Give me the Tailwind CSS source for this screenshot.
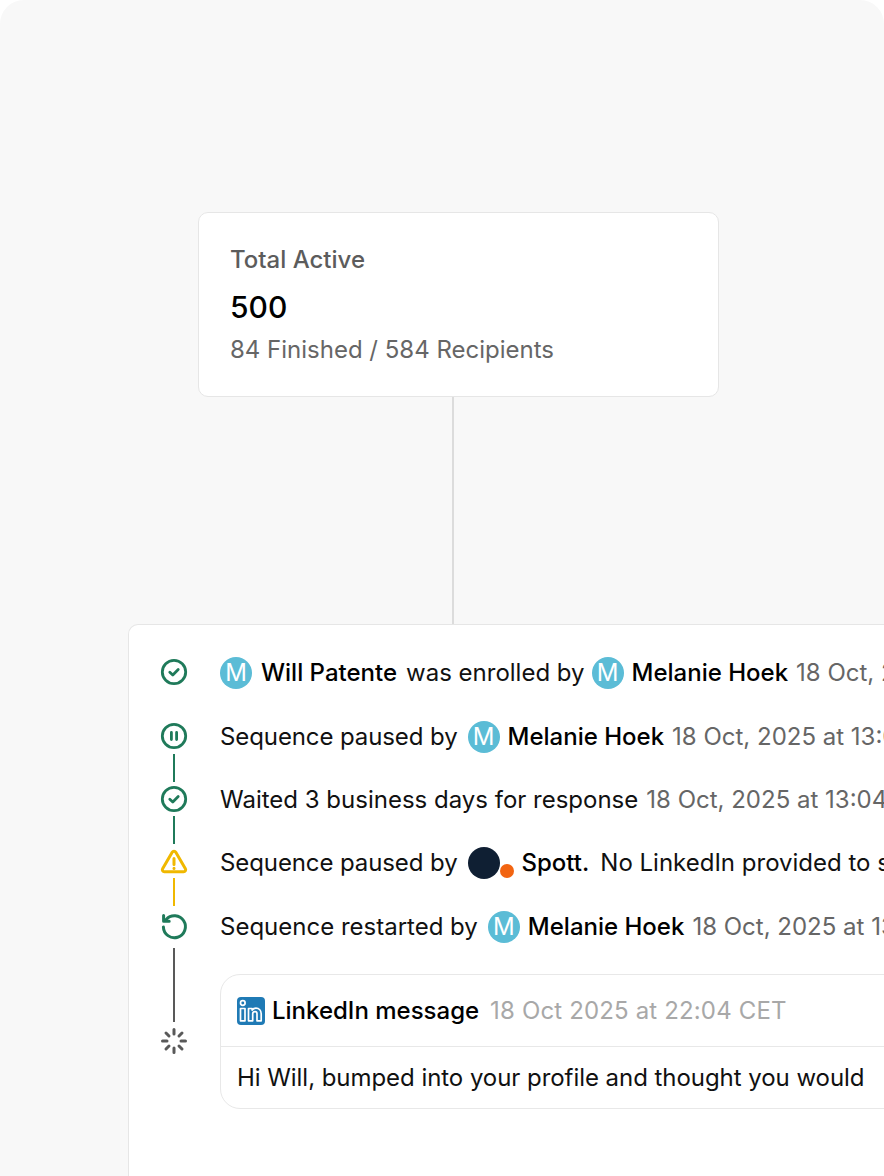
<!DOCTYPE html>
<html lang="en">
<head>
    <meta charset="UTF-8">
    <title>Sequence activity</title>
    <script src="https://cdn.jsdelivr.net/npm/@tailwindcss/browser@4"></script>
</head>
<body class="bg-white font-['Inter',sans-serif]">
    <div class="w-[884px] h-[1176px] bg-[#f8f8f8] rounded-t-[24px] overflow-hidden pt-[212px] flex flex-col">

        <!-- Summary card -->
        <div class="ml-[198px] w-[521px] h-[185px] shrink-0 bg-white border border-[#e6e6e6] rounded-[10px] pl-[31px] pt-[31px]">
            <p class="text-[24px] leading-[32px] font-medium text-[#5c5c5c]">Total Active</p>
            <p class="mt-[11px] text-[30px] leading-[40px] font-medium text-black">500</p>
            <p class="mt-[7px] text-[24px] leading-[32px] text-[#666666]">84 Finished / 584 Recipients</p>
        </div>

        <!-- Connector -->
        <div class="ml-[452px] w-[2px] h-[227px] shrink-0 bg-[#dcdcdc]"></div>

        <!-- Activity card -->
        <div class="ml-[128px] w-[900px] grow bg-white border border-b-0 border-[#e6e6e6] rounded-tl-[10px] pl-[29px] pt-[31px] flex">

            <!-- Timeline rail -->
            <div class="w-[32px] shrink-0 flex flex-col items-center">
                <svg class="w-[32px] h-[32px] shrink-0" viewBox="0 0 32 32" fill="none" stroke="#1f7a5a" stroke-width="2.8" stroke-linecap="round" stroke-linejoin="round"><circle cx="16" cy="16" r="11.7"/><path d="M11.8 16.2l3 2.8 5.4-5.4"/></svg>
                <svg class="w-[32px] h-[32px] shrink-0 mt-[32px]" viewBox="0 0 32 32" fill="none" stroke="#1f7a5a" stroke-width="2.8" stroke-linecap="round"><circle cx="16" cy="16" r="11.7"/><path d="M13.4 12.5v7M18.6 12.5v7"/></svg>
                <div class="w-[2px] h-[28px] mt-[2px] mb-[1px] shrink-0 bg-[#1f7a5a]"></div>
                <svg class="w-[32px] h-[32px] shrink-0" viewBox="0 0 32 32" fill="none" stroke="#1f7a5a" stroke-width="2.8" stroke-linecap="round" stroke-linejoin="round"><circle cx="16" cy="16" r="11.7"/><path d="M11.8 16.2l3 2.8 5.4-5.4"/></svg>
                <div class="w-[2px] h-[28px] mt-[1px] mb-[2px] shrink-0 bg-[#1f7a5a]"></div>
                <svg class="w-[32px] h-[32px] shrink-0" viewBox="0 0 32 32" fill="none" stroke="#f0b800" stroke-width="3" stroke-linecap="round" stroke-linejoin="round"><path d="M14.2 6.2L4.6 22.8c-.8 1.4.2 3 1.8 3h19.2c1.6 0 2.6-1.6 1.8-3L17.8 6.2c-.8-1.4-2.8-1.4-3.6 0z"/><path d="M16 12.5v6M16 22.3v.1"/></svg>
                <div class="w-[2px] h-[28px] mb-[4px] shrink-0 bg-[#f0b800]"></div>
                <svg class="w-[32px] h-[32px] shrink-0" viewBox="0 0 32 32" fill="none" stroke="#1f7a5a" stroke-width="3" stroke-linecap="round" stroke-linejoin="round"><path d="M8.2 9.4A11 11 0 1 1 5.4 17"/><path d="M5.6 5.6v5.6h5.6"/></svg>
                <div class="w-[2px] h-[74px] mt-[6px] mb-[3px] shrink-0 bg-[#595959]"></div>
                <svg class="w-[32px] h-[32px] shrink-0" viewBox="0 0 32 32" fill="none" stroke="#595959" stroke-width="3" stroke-linecap="round"><path d="M16 4.5v4.5M16 23v4.5M4.5 16H9M23 16h4.5M8 8l3 3M21 21l3 3M24 8l-3 3M11 21l-3 3"/></svg>
            </div>

            <!-- Entries -->
            <div class="ml-[30px] pt-[1px] flex flex-col text-[24px] leading-[32px] text-[#111111] whitespace-nowrap">
                <div class="flex items-center h-[32px]">
                    <span class="w-[32px] h-[32px] rounded-full bg-[#5bbcd6] text-white flex items-center justify-center text-[24px]">M</span>
                    <span class="ml-[9px] font-medium text-black">Will Patente</span>
                    <span class="ml-[9px]">was enrolled by</span>
                    <span class="ml-[7px] w-[32px] h-[32px] rounded-full bg-[#5bbcd6] text-white flex items-center justify-center text-[24px]">M</span>
                    <span class="ml-[8px] font-medium text-black">Melanie Hoek</span>
                    <span class="ml-[8px] text-[#666666]">18 Oct, 2025 at 13:04 CET</span>
                </div>
                <div class="flex items-center h-[32px] mt-[32px]">
                    <span class="tracking-[-0.1px]">Sequence paused by</span>
                    <span class="ml-[10px] w-[32px] h-[32px] rounded-full bg-[#5bbcd6] text-white flex items-center justify-center text-[24px]">M</span>
                    <span class="ml-[8px] font-medium text-black">Melanie Hoek</span>
                    <span class="ml-[8px] text-[#666666]">18 Oct, 2025 at 13:04 CET</span>
                </div>
                <div class="flex items-center h-[32px] mt-[31px]">
                    <span>Waited 3 business days for response</span>
                    <span class="ml-[8px] text-[#666666]">18 Oct, 2025 at 13:04 CET</span>
                </div>
                <div class="flex items-center h-[32px] mt-[31px]">
                    <span class="tracking-[-0.1px]">Sequence paused by</span>
                    <span class="relative ml-[10px] w-[32px] h-[32px] rounded-full bg-[#0f1f33] shrink-0">
                        <span class="absolute left-[32px] top-[17px] w-[14px] h-[14px] rounded-full bg-[#f26411]"></span>
                    </span>
                    <span class="ml-[22px] font-medium text-black">Spott.</span>
                    <span class="ml-[11px]">No LinkedIn provided to send</span>
                </div>
                <div class="flex items-center h-[32px] mt-[32px]">
                    <span>Sequence restarted by</span>
                    <span class="ml-[10px] w-[32px] h-[32px] rounded-full bg-[#5bbcd6] text-white flex items-center justify-center text-[24px]">M</span>
                    <span class="ml-[8px] font-medium text-black">Melanie Hoek</span>
                    <span class="ml-[8px] text-[#666666]">18 Oct, 2025 at 13:04 CET</span>
                </div>

                <!-- LinkedIn message -->
                <div class="mt-[31px] w-[720px] h-[135px] border border-[#e8e8e8] rounded-[20px] bg-white">
                    <div class="h-[72px] px-[16px] flex items-center border-b border-[#e8e8e8]">
                        <svg class="w-[28px] h-[28px] shrink-0" viewBox="0 0 28 28" fill="none" stroke="#fff" stroke-width="1.7" stroke-linejoin="round">
                            <rect width="28" height="28" rx="4" fill="#1f7ab5" stroke="none"/>
                            <circle cx="5.8" cy="6" r="2.3"/>
                            <path d="M3.5 11.5H8v12.3H3.5z"/>
                            <path d="M11.5 23.8V11.5h3.6v1.6c1-1.2 2.4-1.9 3.8-1.9 3.2 0 5.3 2.3 5.3 5.6v7h-4.2v-7c0-1.3-.7-2.2-1.9-2.2s-2.4.9-2.4 2.2v7z"/>
                        </svg>
                        <span class="ml-[7px] font-medium text-black">LinkedIn message</span>
                        <span class="ml-[11px] tracking-[0.15px] text-[#a8a8a8]">18 Oct 2025 at 22:04 CET</span>
                    </div>
                    <p class="px-[16px] pt-[15px] tracking-[-0.05px]">Hi Will, bumped into your profile and thought you would</p>
                </div>
            </div>
        </div>
    </div>
</body>
</html>
